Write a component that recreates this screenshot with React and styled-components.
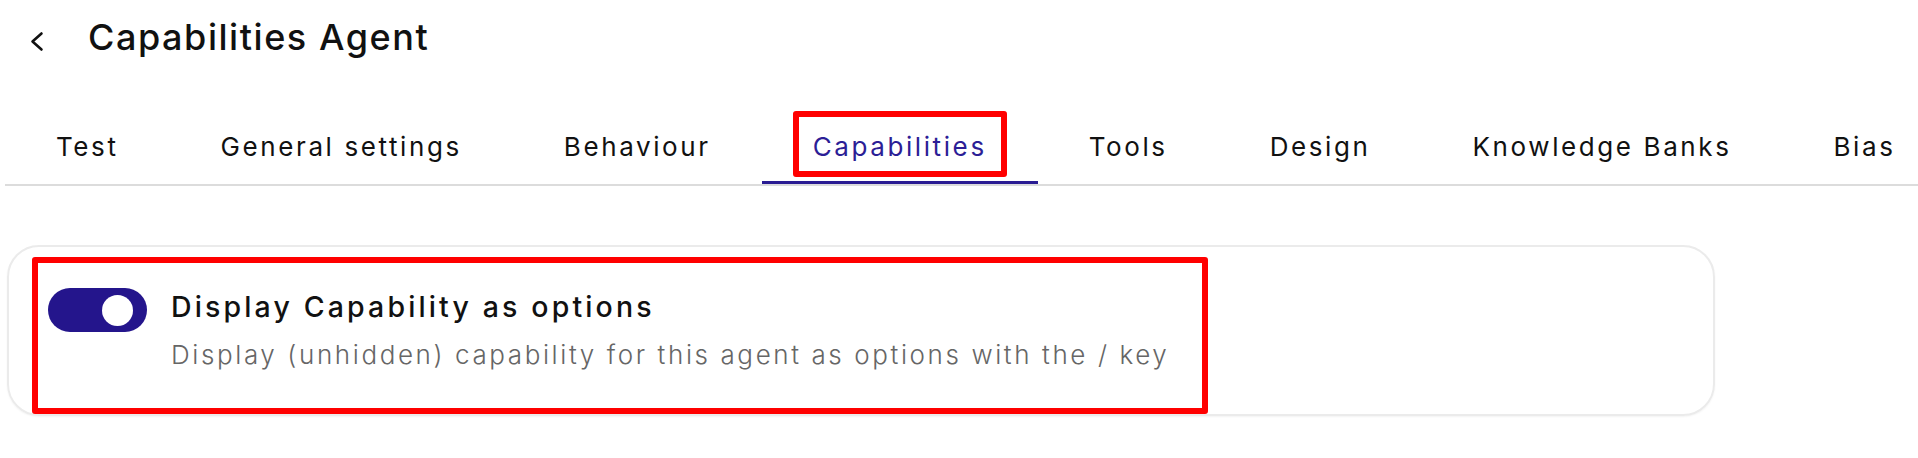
import React from 'react'
import styled, { createGlobalStyle } from 'styled-components'

const GlobalStyle = createGlobalStyle`
    body {
        margin: 0;
        background: #fff;
        font-family: Inter, "Noto Sans", sans-serif;
        color: #111;
    }
`

const tabs = [
    'Test',
    'General settings',
    'Behaviour',
    'Capabilities',
    'Tools',
    'Design',
    'Knowledge Banks',
    'Bias',
]

const ACTIVE = 'Capabilities'

const App = () => {
    return (
        <Page>
            <GlobalStyle />
            <Header>
                <BackButton aria-label="Back">
                    <svg width="16" height="22" viewBox="0 0 16 22" fill="none">
                        <path d="M13.5 3.5 L4.5 11.5 L13.5 19.5" stroke="#111" strokeWidth="2.6" strokeLinecap="round" strokeLinejoin="round" />
                    </svg>
                </BackButton>
                <Title>Capabilities Agent</Title>
            </Header>

            <TabBar>
                {tabs.map(tab => (
                    <Tab key={tab} active={tab === ACTIVE}>
                        <TabLabel active={tab === ACTIVE}>{tab}</TabLabel>
                    </Tab>
                ))}
            </TabBar>

            <Card>
                <Highlight>
                    <SettingRow>
                        <Switch role="switch" aria-checked="true">
                            <Knob />
                        </Switch>
                        <SettingText>
                            <SettingTitle>Display Capability as options</SettingTitle>
                            <SettingHint>Display (unhidden) capability for this agent as options with the / key</SettingHint>
                        </SettingText>
                    </SettingRow>
                </Highlight>
            </Card>
        </Page>
    )
}

const Page = styled.div`
    width: 1918px;
    height: 458px;
    overflow: hidden;
`

const Header = styled.div`
    display: flex;
    align-items: center;
    padding: 15px 0 0 28px;
    gap: 44px;
`

const BackButton = styled.button`
    display: flex;
    align-items: center;
    justify-content: center;
    padding: 0;
    margin-top: 7px;
    background: transparent;
    border: none;
    cursor: pointer;
`

const Title = styled.h1`
    margin: 0;
    font-size: 36px;
    line-height: 44px;
    font-weight: 500;
    letter-spacing: 0.043em;
    color: #111;
`

const TabBar = styled.div`
    display: flex;
    margin: 41px 0 0 5px;
    border-bottom: 2px solid #dcdcdc;
    overflow: hidden;
`

const Tab = styled.div`
    flex-shrink: 0;
    padding: 11px 31px 4px;
    border-bottom: 3px solid ${({ active }) => (active ? '#2a1c93' : 'transparent')};
    cursor: pointer;
`

const TabLabel = styled.span`
    display: block;
    padding: 14px 14px 8px;
    border: 6px solid ${({ active }) => (active ? '#ff0000' : 'transparent')};
    border-radius: 3px;
    font-size: 26px;
    line-height: 32px;
    font-weight: 400;
    letter-spacing: 0.1em;
    white-space: nowrap;
    color: ${({ active }) => (active ? '#2c1e96' : '#111')};
`

const Card = styled.div`
    box-sizing: border-box;
    width: 1708px;
    height: 171px;
    margin: 59px 0 0 7px;
    padding: 10px 0 0 23px;
    border: 2px solid #ebebeb;
    border-radius: 32px;
    box-shadow: 0 1px 2px rgba(0, 0, 0, 0.05);
`

const Highlight = styled.div`
    box-sizing: border-box;
    width: 1176px;
    height: 157px;
    border: 6px solid #ff0000;
    border-radius: 3px;
`

const SettingRow = styled.div`
    display: flex;
    align-items: flex-start;
    gap: 24px;
    padding: 25px 0 0 10px;
`

const Switch = styled.div`
    box-sizing: border-box;
    flex-shrink: 0;
    width: 99px;
    height: 44px;
    display: flex;
    align-items: center;
    justify-content: flex-end;
    padding-right: 14px;
    border-radius: 22px;
    background: #24158c;
`

const Knob = styled.span`
    width: 31px;
    height: 31px;
    border-radius: 50%;
    background: #fff;
`

const SettingText = styled.div`
    display: flex;
    flex-direction: column;
    gap: 12px;
    margin-top: 0;
`

const SettingTitle = styled.div`
    font-size: 28.5px;
    line-height: 38px;
    font-weight: 500;
    letter-spacing: 0.11em;
    white-space: nowrap;
    color: #111;
`

const SettingHint = styled.div`
    font-size: 26px;
    line-height: 34px;
    font-weight: 300;
    letter-spacing: 0.1em;
    white-space: nowrap;
    color: #666;
`

export default App
